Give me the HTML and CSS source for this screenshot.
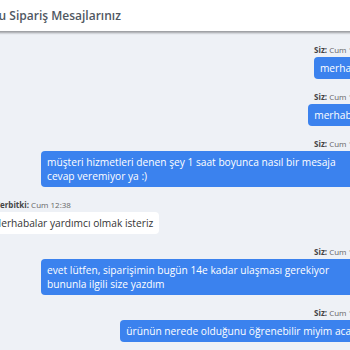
FILE: index.html
```html
<!DOCTYPE html>
<html lang="tr">
<head>
  <meta charset="UTF-8" />
  <meta name="viewport" content="width=device-width, initial-scale=1.0"/>
  <title>Sipariş Mesajlarınız</title>
  <link rel="stylesheet" href="styles.css">
</head>
<body>
  <div class="page">
    <header class="head">
      <h1>Konu Sipariş Mesajlarınız</h1>
    </header>

    <div class="chat">
      <div class="msg me">
        <div class="meta"><b>Siz:</b> Cum 12:36</div>
        <div class="bubble">merhaba</div>
      </div>
      <div class="msg me">
        <div class="meta"><b>Siz:</b> Cum 12:36</div>
        <div class="bubble">merhabaa</div>
      </div>
      <div class="msg me">
        <div class="meta"><b>Siz:</b> Cum 12:37</div>
        <div class="bubble">müşteri hizmetleri denen şey 1 saat boyunca nasıl bir mesaja cevap veremiyor ya :)</div>
      </div>
      <div class="msg them">
        <div class="meta"><b>Yerbitki:</b> Cum 12:38</div>
        <div class="bubble">Merhabalar yardımcı olmak isteriz</div>
      </div>
      <div class="msg me">
        <div class="meta"><b>Siz:</b> Cum 12:39</div>
        <div class="bubble">evet lütfen, siparişimin bugün 14e kadar ulaşması gerekiyor bununla ilgili size yazdım</div>
      </div>
      <div class="msg me">
        <div class="meta"><b>Siz:</b> Cum 12:40</div>
        <div class="bubble">ürünün nerede olduğunu öğrenebilir miyim acaba</div>
      </div>
    </div>
  </div>
</body>
</html>
```

FILE: styles.css
```css
body {
  margin: 0;
  background: #eef1f6;
  font-family: 'Open Sans', sans-serif;
  overflow: hidden;
}

.page {
  width: 420px;
  margin-left: -35px;
}

.head {
  background: #fff;
  height: 31px;
  padding: 0 11px;
  box-shadow: 0 2px 2px rgba(0, 0, 0, 0.35);
  display: flex;
  align-items: center;
  position: relative;
}

.head h1 {
  margin: 0;
  font-size: 12px;
  font-weight: 600;
  color: #505862;
}

.chat {
  padding: 14px 16px 10px 21px;
  display: flex;
  flex-direction: column;
  gap: 13px;
}

.msg {
  display: flex;
  flex-direction: column;
}

.msg.me {
  align-items: flex-end;
}

.msg.them {
  align-items: flex-start;
}

.meta {
  font-size: 8px;
  line-height: 10px;
  color: #666;
  margin-bottom: 2px;
}

.them .meta {
  padding-left: 9px;
}

.meta b {
  color: #444;
}

.bubble {
  font-size: 10.2px;
  line-height: 14px;
  padding: 4px 6px;
  border-radius: 4px;
  max-width: 316px;
}

.me .bubble {
  background: #3b82ee;
  color: #fff;
}

.them .bubble {
  background: #fff;
  color: #333;
}
```
